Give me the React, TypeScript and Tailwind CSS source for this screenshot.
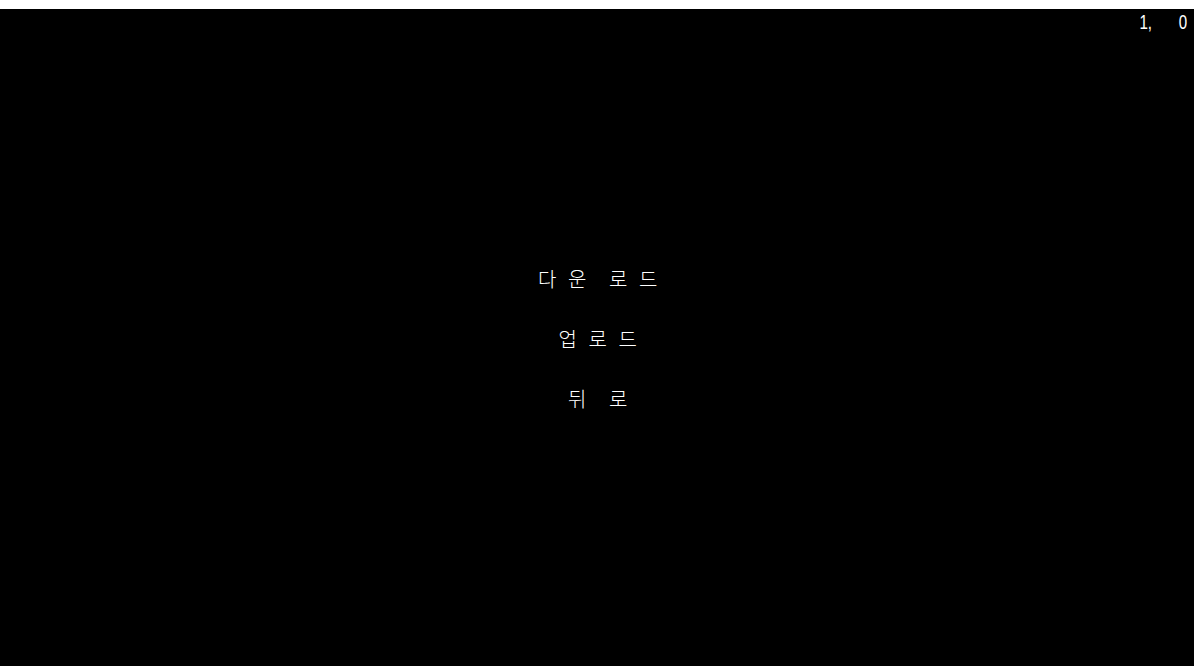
const menuItems = [
  ['다운', '로드'],
  ['업로드'],
  ['뒤', '로'],
];

function MenuLabel({ words }: { words: string[] }) {
  return (
    <div className="flex items-center gap-[24px]">
      {words.map((word, i) => (
        <div key={i} className="flex items-center gap-[13px]">
          {word.split('').map((ch, j) => (
            <span key={j} className="w-[17px] text-center leading-none">
              {ch}
            </span>
          ))}
        </div>
      ))}
    </div>
  );
}

export default function App() {
  return (
    <div className="w-[1194px] h-[666px] flex flex-col bg-white overflow-hidden">
      {/* top strip */}
      <div className="h-[9px] shrink-0 bg-white" />

      <div
        className="flex-1 flex flex-col bg-black text-white"
        style={{ fontFamily: '"Noto Sans CJK KR", "Noto Sans", sans-serif' }}
      >
        {/* coordinates readout */}
        <div className="flex justify-end gap-[23px] pr-[5px] pt-[1px] h-[24px] text-[21px] font-normal leading-[24px] font-['Liberation_Sans',sans-serif]">
          <span className="scale-x-[0.72]">1,</span>
          <span className="scale-x-[0.72]">0</span>
        </div>

        {/* menu */}
        <div className="flex flex-col items-center gap-[40px] pt-[236px] text-[20px] font-light">
          {menuItems.map((words, i) => (
            <MenuLabel key={i} words={words} />
          ))}
        </div>
      </div>
    </div>
  );
}
